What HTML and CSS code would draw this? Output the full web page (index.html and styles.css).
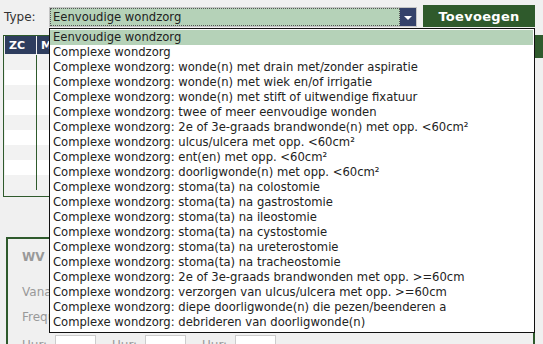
FILE: index.html
```html
<!DOCTYPE html>
<html lang="nl">
<head>
  <meta charset="UTF-8">
  <title>Wondzorg toevoegen</title>
  <link rel="stylesheet" href="styles.css">
</head>
<body>

<div class="toolbar">
  <label class="lbl">Type:</label>
  <div class="select">
    <span class="select-value">Eenvoudige wondzorg</span>
    <span class="select-arrow"></span>
  </div>
  <button class="btn-add">Toevoegen</button>

  <ul class="options">
    <li class="selected">Eenvoudige wondzorg</li>
    <li>Complexe wondzorg</li>
    <li>Complexe wondzorg: wonde(n) met drain met/zonder aspiratie</li>
    <li>Complexe wondzorg: wonde(n) met wiek en/of irrigatie</li>
    <li>Complexe wondzorg: wonde(n) met stift of uitwendige fixatuur</li>
    <li>Complexe wondzorg: twee of meer eenvoudige wonden</li>
    <li>Complexe wondzorg: 2e of 3e-graads brandwonde(n) met opp. &lt;60cm²</li>
    <li>Complexe wondzorg: ulcus/ulcera met opp. &lt;60cm²</li>
    <li>Complexe wondzorg: ent(en) met opp. &lt;60cm²</li>
    <li>Complexe wondzorg: doorligwonde(n) met opp. &lt;60cm²</li>
    <li>Complexe wondzorg: stoma(ta) na colostomie</li>
    <li>Complexe wondzorg: stoma(ta) na gastrostomie</li>
    <li>Complexe wondzorg: stoma(ta) na ileostomie</li>
    <li>Complexe wondzorg: stoma(ta) na cystostomie</li>
    <li>Complexe wondzorg: stoma(ta) na ureterostomie</li>
    <li>Complexe wondzorg: stoma(ta) na tracheostomie</li>
    <li>Complexe wondzorg: 2e of 3e-graads brandwonden met opp. &gt;=60cm</li>
    <li>Complexe wondzorg: verzorgen van ulcus/ulcera met opp. &gt;=60cm</li>
    <li>Complexe wondzorg: diepe doorligwonde(n) die pezen/beenderen a</li>
    <li>Complexe wondzorg: debrideren van doorligwonde(n)</li>
  </ul>
</div>

<div class="main">
  <div class="grid-panel">
    <table class="grid">
      <tr><th class="c-zc">ZC</th><th>M</th></tr>
      <tr><td></td><td></td></tr>
      <tr><td></td><td></td></tr>
      <tr><td></td><td></td></tr>
      <tr><td></td><td></td></tr>
      <tr><td></td><td></td></tr>
      <tr><td></td><td></td></tr>
      <tr><td></td><td></td></tr>
      <tr><td></td><td></td></tr>
      <tr><td></td><td></td></tr>
    </table>
  </div>
  <div class="side-panel"><div class="side-head"></div></div>
</div>

<div class="detail">
  <h4>WV</h4>
  <p class="row first">Vanaf</p>
  <p class="row">Frequentie</p>
  <div class="times">
    <span>Uur:</span><input type="text">
    <span>Uur:</span><input type="text">
    <span>Uur:</span><input type="text">
  </div>
</div>

</body>
</html>
```

FILE: styles.css
```css
body {
  margin: 0;
  background: #f0f0f0;
  font-family: "DejaVu Sans", Verdana, sans-serif;
  font-size: 12px;
  color: #222;
  width: 543px;
  height: 344px;
  overflow: hidden;
}

.toolbar { position: relative; display: flex; align-items: center; height: 34px; padding: 0 0 0 4px; }
.lbl { width: 45px; color: #333; font-size: 12px; }
.select { display: flex; width: 366px; height: 18px; border: 1px solid #c4c4c4; background: #b5d2b8; font-size: 11.6px; }
.select-value { flex: 1; margin: 1px; padding-left: 2px; line-height: 16px; outline: 1px dotted #555; }
.select-arrow { width: 16px; background: #34416a; position: relative; }
.select-arrow::after { content: ""; position: absolute; left: 4px; top: 8px; border: 4px solid transparent; border-top: 4px solid #fff; border-bottom: 0; }
.btn-add { margin-left: 6px; width: 112px; height: 22px; margin-top: -2px; border: 0; background: #2f5a2c; color: #fff; font-family: inherit; font-weight: bold; font-size: 13px; letter-spacing: .3px; }

.options { position: absolute; left: 49px; top: 28px; width: 484px; margin: 0; padding: 1px 0 2px; list-style: none; background: #fff; border: 1px solid #111; z-index: 5; font-size: 11.6px; }
.options li { height: 15px; line-height: 15px; padding-left: 3px; white-space: nowrap; overflow: hidden; }
.options li.selected { background: #b5d2b8; margin-right: 1px; }

.main { display: flex; padding: 1px 0 0 3px; gap: 3px; }
.grid-panel { width: 533px; height: 160px; border: 1px solid #2f5a2c; }
.grid { border-collapse: collapse; width: 100%; }
.grid th { background: #2e3d5e; color: #fff; height: 18px; text-align: left; padding: 0 4px; font-size: 11px; border: 1px solid #f0f0f0; border-top: 0; }
.grid th.c-zc { width: 23px; }
.grid td { height: 15px; padding: 0; border-left: 1px solid #2f5a2c; }
.grid td:first-child { border-left: 0; }
.grid tr:nth-child(even) td { background: #f2f2f2; }
.grid tr:nth-child(odd) td { background: #fff; }
.side-panel { width: 20px; border-left: 2px solid #2f5a2c; }
.side-head { height: 23px; background: #2f5a2c; }

.detail { margin: 40px 0 0 6px; width: 511px; height: 120px; border: 2px solid #2f5a2c; border-bottom: 0; padding: 0 0 0 14px; color: #999; line-height: 15px; }
.detail h4 { margin: 11px 0 0; font-size: 12px; }
.detail .row { margin: 10px 0 0; }
.detail .row.first { margin-top: 20px; }
.times { display: flex; align-items: flex-start; margin-top: 10px; height: 18px; }
.times span { line-height: 20px; width: 33px; }
.times input { width: 39px; height: 17px; padding: 0; border: 1px solid #ccc; background: #fff; margin-right: 16px; }
```
